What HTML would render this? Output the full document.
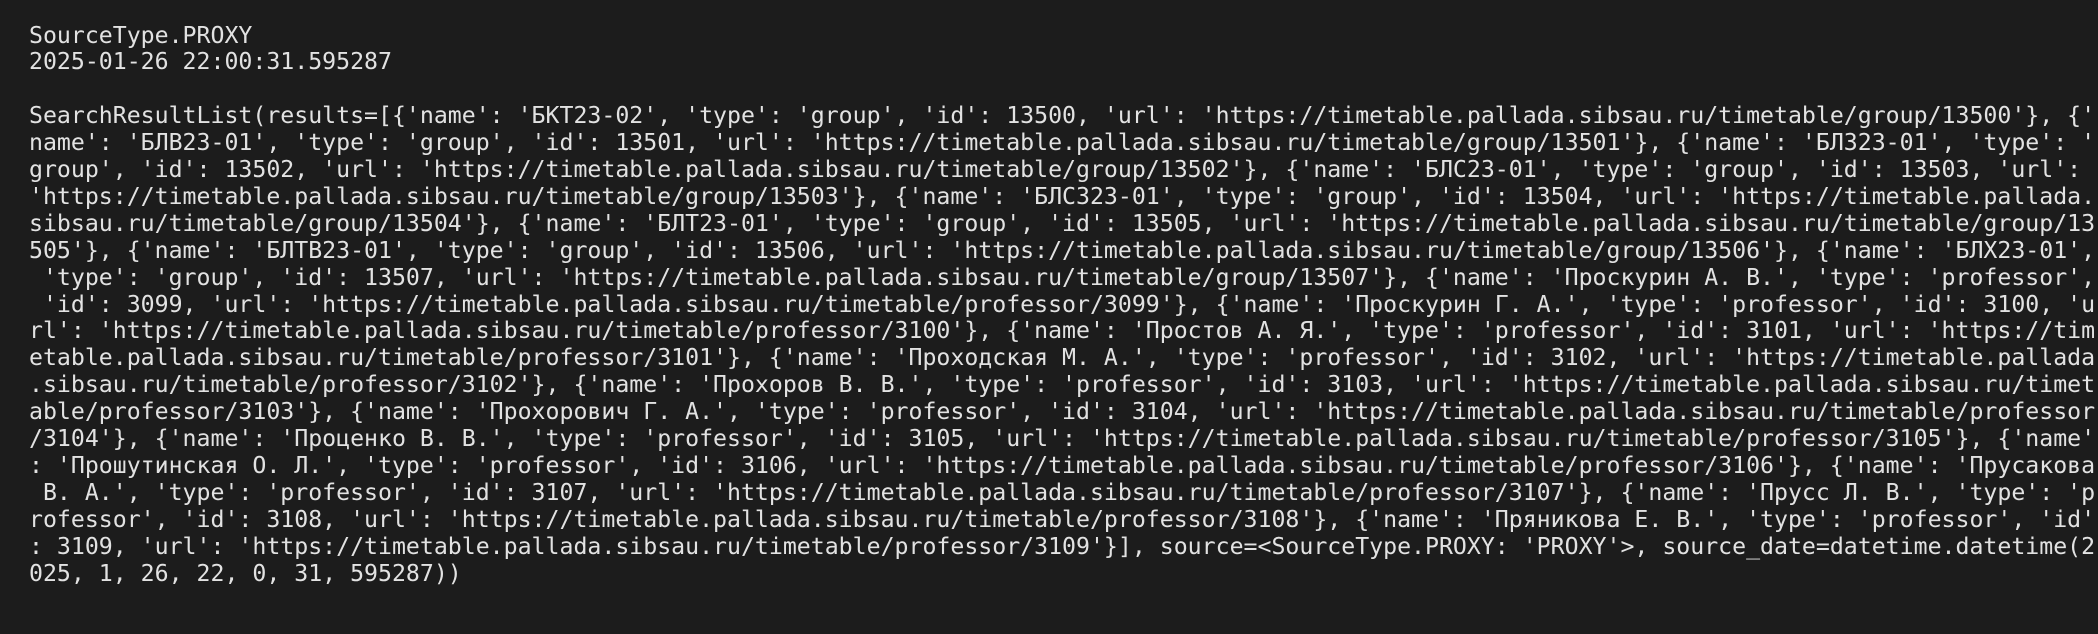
<!DOCTYPE html>
<html><head><meta charset="utf-8"><style>
html,body{margin:0;padding:0;background:#1c1c1c;width:2098px;height:634px;overflow:hidden}
pre{margin:0;padding:22.5px 0 0 29px;font-family:"DejaVu Sans Mono","Liberation Mono",monospace;font-size:23.2px;line-height:26.9px;color:#e2e2e2;white-space:pre;letter-spacing:0}
</style></head><body><pre>SourceType.PROXY
2025-01-26 22:00:31.595287

SearchResultList(results=[{'name': 'БКТ23-02', 'type': 'group', 'id': 13500, 'url': 'https://timetable.pallada.sibsau.ru/timetable/group/13500'}, {'
name': 'БЛВ23-01', 'type': 'group', 'id': 13501, 'url': 'https://timetable.pallada.sibsau.ru/timetable/group/13501'}, {'name': 'БЛ323-01', 'type': '
group', 'id': 13502, 'url': 'https://timetable.pallada.sibsau.ru/timetable/group/13502'}, {'name': 'БЛС23-01', 'type': 'group', 'id': 13503, 'url': 
'https://timetable.pallada.sibsau.ru/timetable/group/13503'}, {'name': 'БЛС323-01', 'type': 'group', 'id': 13504, 'url': 'https://timetable.pallada.
sibsau.ru/timetable/group/13504'}, {'name': 'БЛТ23-01', 'type': 'group', 'id': 13505, 'url': 'https://timetable.pallada.sibsau.ru/timetable/group/13
505'}, {'name': 'БЛТВ23-01', 'type': 'group', 'id': 13506, 'url': 'https://timetable.pallada.sibsau.ru/timetable/group/13506'}, {'name': 'БЛХ23-01',
 'type': 'group', 'id': 13507, 'url': 'https://timetable.pallada.sibsau.ru/timetable/group/13507'}, {'name': 'Проскурин А. В.', 'type': 'professor',
 'id': 3099, 'url': 'https://timetable.pallada.sibsau.ru/timetable/professor/3099'}, {'name': 'Проскурин Г. А.', 'type': 'professor', 'id': 3100, 'u
rl': 'https://timetable.pallada.sibsau.ru/timetable/professor/3100'}, {'name': 'Простов А. Я.', 'type': 'professor', 'id': 3101, 'url': 'https://tim
etable.pallada.sibsau.ru/timetable/professor/3101'}, {'name': 'Проходская М. А.', 'type': 'professor', 'id': 3102, 'url': 'https://timetable.pallada
.sibsau.ru/timetable/professor/3102'}, {'name': 'Прохоров В. В.', 'type': 'professor', 'id': 3103, 'url': 'https://timetable.pallada.sibsau.ru/timet
able/professor/3103'}, {'name': 'Прохорович Г. А.', 'type': 'professor', 'id': 3104, 'url': 'https://timetable.pallada.sibsau.ru/timetable/professor
/3104'}, {'name': 'Проценко В. В.', 'type': 'professor', 'id': 3105, 'url': 'https://timetable.pallada.sibsau.ru/timetable/professor/3105'}, {'name'
: 'Прошутинская О. Л.', 'type': 'professor', 'id': 3106, 'url': 'https://timetable.pallada.sibsau.ru/timetable/professor/3106'}, {'name': 'Прусакова
 В. А.', 'type': 'professor', 'id': 3107, 'url': 'https://timetable.pallada.sibsau.ru/timetable/professor/3107'}, {'name': 'Прусс Л. В.', 'type': 'p
rofessor', 'id': 3108, 'url': 'https://timetable.pallada.sibsau.ru/timetable/professor/3108'}, {'name': 'Пряникова Е. В.', 'type': 'professor', 'id'
: 3109, 'url': 'https://timetable.pallada.sibsau.ru/timetable/professor/3109'}], source=&lt;SourceType.PROXY: 'PROXY'&gt;, source_date=datetime.datetime(2
025, 1, 26, 22, 0, 31, 595287))</pre></body></html>
